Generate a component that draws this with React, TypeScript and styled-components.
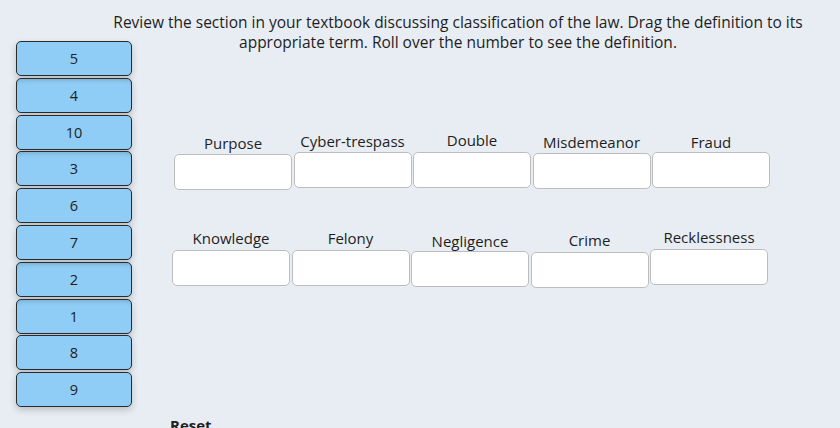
import React from 'react'
import styled, { createGlobalStyle } from 'styled-components';

const GlobalStyle = createGlobalStyle`
  html, body {
    margin: 0;
    padding: 0;
    background-color: #e8edf4;
    font-family: "Open Sans", "Noto Sans", sans-serif;
    color: #1e1e1e;
  }
`;

interface Term {
  label: string;
  lt: number;
  bt: number;
}

const cards = [
  { n: '5', shaded: false },
  { n: '4', shaded: true },
  { n: '10', shaded: false },
  { n: '3', shaded: true },
  { n: '6', shaded: false },
  { n: '7', shaded: false },
  { n: '2', shaded: true },
  { n: '1', shaded: true },
  { n: '8', shaded: false },
  { n: '9', shaded: false },
];

const rowOne: Array<Term> = [
  { label: 'Purpose', lt: 4, bt: 1 },
  { label: 'Cyber-trespass', lt: 2, bt: 1 },
  { label: 'Double', lt: 1, bt: 2 },
  { label: 'Misdemeanor', lt: 3, bt: 1 },
  { label: 'Fraud', lt: 3, bt: 0 },
];

const rowTwo: Array<Term> = [
  { label: 'Knowledge', lt: 1, bt: 2 },
  { label: 'Felony', lt: 1, bt: 2 },
  { label: 'Negligence', lt: 4, bt: 0 },
  { label: 'Crime', lt: 3, bt: 2 },
  { label: 'Recklessness', lt: 0, bt: 2 },
];

const App = () => {
  return (
    <Page>
      <GlobalStyle />
      <Header>
        Review the section in your textbook discussing classification of the law. Drag the definition to its
        <br />
        appropriate term. Roll over the number to see the definition.
      </Header>
      <Body>
        <CardList>
          {cards.map((card) => (
            <NumberCard key={card.n} $shaded={card.shaded}>{card.n}</NumberCard>
          ))}
        </CardList>
        <Main>
          <TermRow $indent={4}>
            {rowOne.map((term) => (
              <TermColumn key={term.label}>
                <TermLabel $lt={term.lt}>{term.label}</TermLabel>
                <DropBox $bt={term.bt} />
              </TermColumn>
            ))}
          </TermRow>
          <TermRow $indent={2}>
            {rowTwo.map((term) => (
              <TermColumn key={term.label}>
                <TermLabel $lt={term.lt}>{term.label}</TermLabel>
                <DropBox $bt={term.bt} />
              </TermColumn>
            ))}
          </TermRow>
          <ResetButton>Reset</ResetButton>
        </Main>
      </Body>
    </Page>
  )
}

const Page = styled.div`
  width: 840px;
  height: 428px;
  overflow: hidden;
`;

const Header = styled.div`
  box-sizing: border-box;
  height: 41px;
  padding: 12px 0 0 76px;
  text-align: center;
  font-size: 15.5px;
  line-height: 20px;
  white-space: nowrap;
`;

const Body = styled.div`
  display: grid;
  grid-template-columns: 116px 1fr;
  column-gap: 38px;
  padding-left: 16px;
`;

const CardList = styled.div`
  display: flex;
  flex-direction: column;
  row-gap: 1.8px;
`;

const NumberCard = styled.div<{ $shaded: boolean }>`
  box-sizing: border-box;
  height: 35px;
  display: flex;
  align-items: center;
  justify-content: center;
  background-color: #8fcdf6;
  border: 1px solid #2b2b2b;
  border-radius: 5px;
  box-shadow: ${(p) => (p.$shaded ? 'inset 0 6px 5px -5px rgba(0, 0, 0, 0.18), ' : '')}0 3px 7px rgba(0, 0, 0, 0.2);
  font-size: 14.5px;
  color: #1e1e1e;
`;

const Main = styled.div`
  display: flex;
  flex-direction: column;
  padding-top: 88px;
`;

const TermRow = styled.div<{ $indent: number }>`
  height: 98px;
  display: flex;
  align-items: flex-start;
  column-gap: 1.5px;
  padding-left: ${(p) => p.$indent}px;
`;

const TermColumn = styled.div`
  width: 118px;
  display: flex;
  flex-direction: column;
  align-items: center;
`;

const TermLabel = styled.span<{ $lt: number }>`
  margin-top: ${(p) => p.$lt}px;
  font-size: 15px;
  line-height: 20px;
  white-space: nowrap;
`;

const DropBox = styled.div<{ $bt: number }>`
  box-sizing: border-box;
  width: 118px;
  height: 36px;
  margin-top: ${(p) => p.$bt}px;
  background-color: white;
  border: 1px solid #bdbdbd;
  border-radius: 5px;
`;

const ResetButton = styled.span`
  margin-top: 90px;
  font-size: 15px;
  line-height: 20px;
  font-weight: 700;
`;

export default App;
